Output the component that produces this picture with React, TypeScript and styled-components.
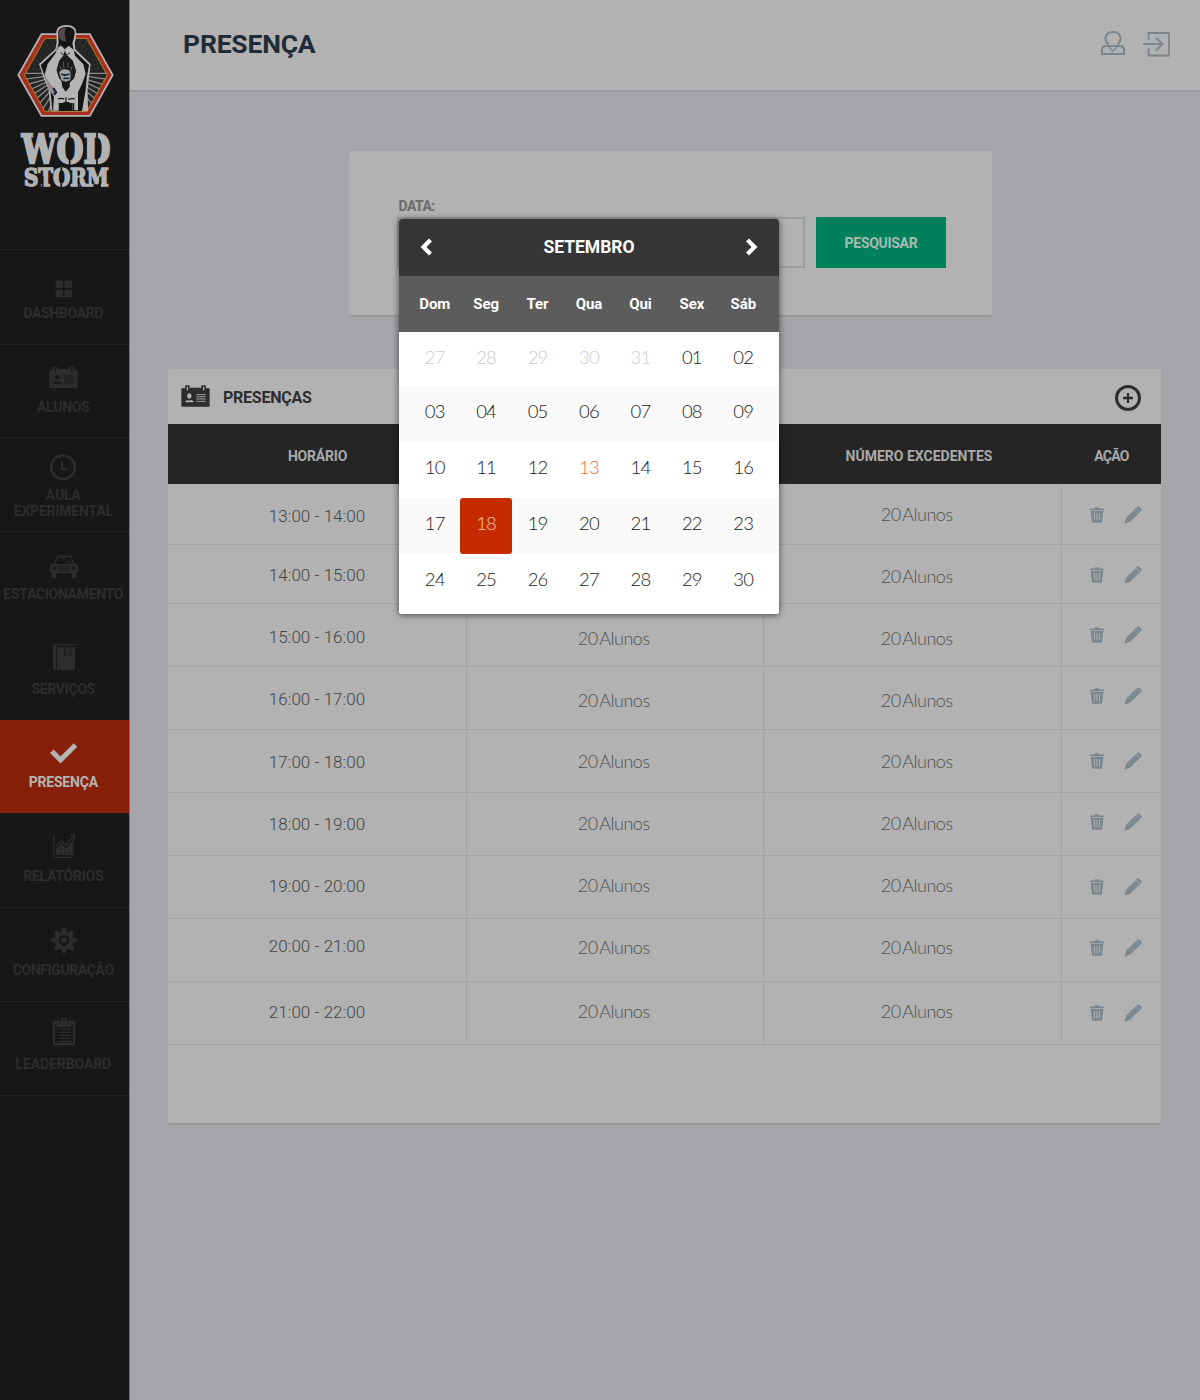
import React from 'react';
import styled, { createGlobalStyle } from 'styled-components';

const Global = createGlobalStyle`
  * { box-sizing: border-box; }
  body { margin: 0; background: #a4a5a9; font-family: Roboto, "Open Sans", sans-serif; }
`;

const Page = styled.div`
  display: flex;
  width: 1200px;
  height: 1400px;
  overflow: hidden;
`;

/* ---------- sidebar ---------- */
const Sidebar = styled.nav`
  display: flex;
  flex-direction: column;
  width: 130px;
  flex: none;
  background: #171717;
  border-right: 1px solid #747475;
`;

const Brand = styled.div`
  height: 250px;
  padding-top: 10px;
  border-bottom: 1px solid #222;
`;

const NavItem = styled.a<{ $height: number; $top: number; $active?: boolean; $line?: boolean }>`
  display: flex;
  flex-direction: column;
  align-items: center;
  height: ${p => p.$height}px;
  padding: ${p => p.$top}px 1px 0 0;
  border-bottom: ${p => (p.$line ? '1px solid #222' : 'none')};
  background: ${p => (p.$active ? '#86200a' : 'transparent')};
  color: ${p => (p.$active ? '#b4b4b4' : '#2d2d2d')};
`;

const NavIcon = styled.svg`
  width: 36px;
  height: 36px;
  flex: none;
`;

const NavLabel = styled.span<{ $track: number }>`
  margin: 4px 1.5px 0 0;
  font-size: 14px;
  font-weight: 700;
  line-height: 16px;
  letter-spacing: ${p => p.$track}px;
  text-align: center;
  white-space: pre;
`;

/* ---------- main ---------- */
const Main = styled.main`
  display: flex;
  flex-direction: column;
  flex: 1;
`;

const TopBar = styled.header`
  display: flex;
  align-items: center;
  justify-content: space-between;
  height: 92px;
  padding: 0 30px 4px 53px;
  background: #b2b2b2;
  border-bottom: 2px solid #9a9ba0;
`;

const Title = styled.h1`
  margin: 0;
  font-size: 26.5px;
  font-weight: 700;
  letter-spacing: -0.2px;
  color: #1f2c38;
`;

const TopIcons = styled.div`
  display: flex;
  gap: 15px;
  margin-top: 1px;
  color: #7c868c;
  svg { display: block; width: 28px; height: 28px; }
`;

const SearchCard = styled.section`
  display: flex;
  flex-direction: column;
  width: 643px;
  height: 166px;
  margin: 59px 0 0 219px;
  padding: 47px 46px 0 48px;
  background: #b2b2b2;
  border-bottom: 2px solid #98999d;
  border-radius: 3px;
`;

const FieldLabel = styled.label`
  padding-left: 1.5px;
  height: 19px;
  line-height: 16px;
  font-size: 14px;
  font-weight: 700;
  letter-spacing: -0.5px;
  color: #6a6a6a;
`;

const SearchRow = styled.div`
  display: flex;
  gap: 11px;
`;

const DateField = styled.div`
  position: relative;
  width: 408px;
  height: 51px;
  border: 2px solid #98a09e;
`;

const SearchButton = styled.button`
  width: 130px;
  height: 51px;
  border: 0;
  padding: 1px 0 0 0;
  background: #00815a;
  color: #a9b9b3;
  font: 700 14px/50px Roboto, sans-serif;
  letter-spacing: -0.3px;
`;

/* ---------- calendar ---------- */
const Calendar = styled.div`
  position: absolute;
  z-index: 2;
  left: 0;
  top: 0;
  width: 380px;
  height: 395px;
  border-radius: 3px;
  overflow: hidden;
  background: #fff;
  box-shadow: 0 1px 7px rgba(0, 0, 0, 0.6);
`;

const MonthBar = styled.div`
  display: flex;
  align-items: center;
  justify-content: space-between;
  height: 57px;
  padding: 0 21px 1px;
  background: #353535;
  color: #fff;
  font-size: 17.5px;
  font-weight: 700;
  letter-spacing: 0;
  svg { display: block; width: 13px; height: 20px; }
`;

const WeekGrid = styled.div<{ $height: number; $shade?: string }>`
  display: grid;
  grid-template-columns: repeat(7, 1fr);
  height: ${p => p.$height}px;
  padding: 0 10px;
  background: ${p => p.$shade || '#fff'};
`;

const Weekday = styled.div`
  text-align: center;
  font-size: 15px;
  font-weight: 700;
  line-height: 56px;
  letter-spacing: -0.1px;
  color: #fff;
`;

const Day = styled.div<{ $kind: string }>`
  text-align: center;
  font: 300 18.5px/50px Lato, sans-serif;
  letter-spacing: -0.8px;
  border-radius: 3px;
  background: ${p => (p.$kind === 'selected' ? '#c62b00' : 'transparent')};
  color: ${p => ({ other: '#cbcbcb', today: '#ea6f45', selected: '#f5c5b5' } as Record<string, string>)[p.$kind] || '#222'};
`;

/* ---------- table ---------- */
const Panel = styled.section`
  width: 993px;
  height: 756px;
  margin: 52px 0 0 38px;
  background: #b2b2b2;
  border-bottom: 2px solid #98999d;
  border-radius: 3px;
`;

const PanelHead = styled.div`
  display: flex;
  align-items: center;
  height: 55px;
  padding: 0 20px 0 13px;
  color: #2d2d2d;
`;

const PanelTitle = styled.h2`
  flex: 1;
  margin: 2px 0 0 13px;
  font-size: 16px;
  font-weight: 700;
  letter-spacing: -0.25px;
`;

const HeadIcon = styled.svg`
  width: 29px;
  height: 22px;
  margin-bottom: 2px;
`;

const AddIcon = styled.svg`
  width: 26px;
  height: 26px;
  margin-top: 3px;
`;

const Row = styled.div<{ $height: number; $head?: boolean }>`
  display: grid;
  grid-template-columns: 299px 297px 298px 99px;
  height: ${p => p.$height}px;
  background: ${p => (p.$head ? '#252525' : 'transparent')};
  border-bottom: ${p => (p.$head ? 'none' : '1px solid #a3a3a4')};
`;

const HeadCell = styled.div<{ $track?: number; $indent?: number }>`
  display: flex;
  align-items: center;
  justify-content: center;
  padding: 4px 0 0 ${p => p.$indent || 0}px;
  font-size: 14px;
  font-weight: 700;
  letter-spacing: ${p => p.$track || 0}px;
  color: #a9a9ab;
`;

const Cell = styled.div<{ $rule?: boolean; $indent?: number }>`
  display: flex;
  align-items: center;
  justify-content: center;
  padding-left: ${p => p.$indent || 0}px;
  border-right: ${p => (p.$rule ? '1px solid #a3a3a4' : 'none')};
`;

const Time = styled.span<{ $shift: number }>`
  margin-top: ${p => p.$shift * 2}px;
  font-size: 17px;
  font-weight: 300;
  letter-spacing: 0.05px;
  color: #444;
`;

const Count = styled.span<{ $shift: number }>`
  margin: ${p => p.$shift * 2 - 2}px 2.5px 0 0;
  font: 300 18px/22px Lato, sans-serif;
  letter-spacing: -0.45px;
  word-spacing: -2.5px;
  color: #505050;
`;

const Actions = styled.div<{ $shift: number }>`
  display: flex;
  align-items: center;
  gap: 20px;
  margin: ${p => p.$shift * 2}px 0 0 9px;
  color: #7a868d;
`;

const Svg = styled.svg<{ $w: number; $h: number }>`
  display: block;
  width: ${p => p.$w}px;
  height: ${p => p.$h}px;
`;

const Rays = () => (
  <g stroke="#8b8b8b">
    {Array.from({ length: 44 }, (_, i) => {
      const a = (i * Math.PI) / 22;
      const upper = a > Math.PI;
      return (
        <line
          key={i}
          x1={197 + Math.cos(a) * 58}
          y1={190 + Math.sin(a) * 58}
          x2={197 + Math.cos(a) * 150}
          y2={190 + Math.sin(a) * 150}
          strokeWidth={upper ? 2.4 : 4}
          strokeDasharray={upper ? '3 7' : undefined}
          strokeOpacity={upper ? 0.5 : 1}
        />
      );
    })}
  </g>
);

const Logo = () => (
  <Svg $w={129} $h={190} viewBox="0 0 387 570">
    <defs>
      <clipPath id="hex"><path d="M135 86H260L322 195L260 304H135L74 195Z" /></clipPath>
    </defs>
    <path d="M123 70H271L341 195L271 320H123L52 195Z" fill="#b5b5b5" />
    <path d="M126 75H268L335 195L268 315H126L58 195Z" fill="#a82f1d" />
    <path d="M134 84H261L324 195L261 306H134L71 195Z" fill="#a9711d" />
    <path d="M136 87H259L320 195L259 303H136L75 195Z" fill="#242424" />
    <g clipPath="url(#hex)"><Rays /></g>
    <path d="M169 66Q170 45 200 45Q229 45 229 68Q229 86 224 98L226 118L272 162L267 202L263 240L264 304H152L146 240L128 196L117 162L166 118L170 98Z" fill="#b5b5b5" />
    <path d="M174 68Q175 50 200 50Q224 50 224 70Q223 86 217 98L221 121L267 165L260 204L257 240L246 303H157L151 240L133 196L122 165L170 121L176 98Z" fill="#151515" />
    <path d="M175 70Q179 52 200 52Q192 62 195 78L199 95L184 91Q174 82 175 70Z" fill="#54484d" />
    <path d="M168 130Q165 112 176 109L190 112L193 126L181 139L164 174L157 199L171 214L174 244L176 303H158L162 260L146 237L133 194L143 162Z" fill="#978991" />
    <path d="M170 125L182 106L195 119L190 137L178 152L170 181L178 205L188 216H211L222 205L228 182L218 152L199 134L194 118L206 107L221 119L225 137L250 163L257 191L246 222L234 247V301H218V279H178V301H162V257L169 242L152 223L135 197L143 163Z" fill="#b4b4b4" />
    <path d="M170 181L178 205L190 216H209L222 205L228 182L218 152L199 134L190 137L178 152Z" fill="#1c1c1c" />
    <path d="M181 128L195 137L210 129" fill="none" stroke="#242424" strokeWidth="3" />
    <path d="M190 155L192 174M204 157V174M180 168L184 180M216 168L213 182" stroke="#777" strokeWidth="2" />
    <path d="M177 188Q182 175 197 177Q213 178 213 194L211 212L199 225L184 213Z" fill="#a4a4a4" stroke="#242424" strokeWidth="2" />
    <path d="M183 192L194 196L209 192M190 205H208" stroke="#1d3346" strokeWidth="5" />
    <path d="M184 211L197 215L210 211L209 231L197 245L187 231Z" fill="#171717" />
    <path d="M160 234L168 247L162 254" fill="none" stroke="#17243d" strokeWidth="7" />
    <path d="M174 267Q184 263 193 268M205 268Q216 264 225 267M198 262V301M190 278L208 278M192 301L198 281L207 299M178 303V279M221 303V279" fill="none" stroke="#151515" strokeWidth="3.500" />
    <g fontFamily="DejaVu Serif, serif" fontWeight="700" fill="#b2b2b2" stroke="#b2b2b2">
      <text x="65" y="460" fontSize="119" strokeWidth="7" textLength="266" lengthAdjust="spacingAndGlyphs">WOD</text>
      <text x="72" y="528" fontSize="71" strokeWidth="5" textLength="254" lengthAdjust="spacingAndGlyphs">STORM</text>
    </g>
    <path d="M209 364V467M291 366V468M184 472V532M128 498V532M236 502V532M300 500V532" stroke="#171717" strokeWidth="5" />
  </Svg>
);

const IdCard = ({ ink }: { ink: string }) => (
  <>
    <path d="M13 32H21V26Q21 23 24 23H32Q35 23 35 26V30H70V26Q70 23 73 23H81Q84 23 84 26V32H92Q95 32 95 35V84Q95 87 92 87H13Q10 87 10 84V35Q10 32 13 32Z" fill="currentColor" />
    <path d="M28 27V38M77 27V38" stroke={ink} strokeWidth="4" />
    <ellipse cx="34" cy="55" rx="6.5" ry="8" fill={ink} />
    <path d="M22 74Q22 68 30 67L34 70L38 67Q47 68 47 74Z" fill={ink} />
    <path d="M55 51H83M55 57.5H83M55 64H83M55 71H83" stroke={ink} strokeWidth="2.6" />
  </>
);

const DARK = '#171717';

const icons: Record<string, React.ReactNode> = {
  dash: <path d="M29 47H51V69H29ZM56 47H78V69H56ZM29 74H51V96H29ZM56 74H78V96H56Z" fill="currentColor" />,
  card: <IdCard ink={DARK} />,
  clock: (
    <g fill="none" stroke="currentColor">
      <circle cx="51" cy="61" r="35.500" strokeWidth="7.500" />
      <path d="M48 45V66H63" strokeWidth="6" />
    </g>
  ),
  car: (
    <>
      <path d="M25 55L33 34Q34 31.500 37 31.500H72Q75 31.500 76 34L84 55" fill="none" stroke="currentColor" strokeWidth="4" />
      <path d="M18 54H90Q96 55 96 61V77Q96 82 91 82H17Q12 82 12 77V61Q12 55 18 54ZM18 82H30V93Q30 96 27 96H21Q18 96 18 93ZM78 82H90V93Q90 96 87 96H81Q78 96 78 93Z" fill="currentColor" />
      <circle cx="25" cy="66" r="5.500" fill={DARK} />
      <circle cx="83" cy="66" r="5.500" fill={DARK} />
      <path d="M36 61H72M36 67H72M36 73H72" stroke={DARK} strokeWidth="2.500" />
      <path d="M61 54Q61 47 67 47Q73 47 73 54M53 32V38M48 38H58" fill="none" stroke="currentColor" strokeWidth="2.500" />
    </>
  ),
  book: (
    <>
      <path d="M27 9H87V13H30Q25 14 30 19H87V84Q87 87 84 87H24Q21 87 21 84V15Q21 9 27 9Z" fill="currentColor" />
      <path d="M31.500 20V87" stroke={DARK} strokeWidth="2.500" />
      <path d="M56 17V44L64.500 36L73 44V17" fill="none" stroke={DARK} strokeWidth="2.500" />
    </>
  ),
  check: <path d="M17.500 52L43.500 78L88.500 33" fill="none" stroke="currentColor" strokeWidth="15" />,
  chart: (
    <>
      <path d="M23 21V88.500H83" fill="none" stroke="currentColor" strokeWidth="3.500" />
      <path d="M30 81V64L46 48L59 60L82 37V81Z" fill="currentColor" />
      <path d="M44 50V81M56 58V81M69 50V81" stroke={DARK} strokeWidth="1.500" />
      <path d="M31 55L46 39L59 51L83 25M72 22.500H85V36" fill="none" stroke="currentColor" strokeWidth="4" />
    </>
  ),
  gear: (
    <>
      <g stroke="currentColor" strokeWidth="15" strokeLinecap="round">
        <path d="M54 24V86M23 55H85M32.500 33.500L75.500 76.500M32.500 76.500L75.500 33.500" />
      </g>
      <circle cx="54" cy="55" r="28" fill="currentColor" />
      <circle cx="54" cy="55" r="16" fill={DARK} />
      <circle cx="54" cy="55" r="8.500" fill="currentColor" />
    </>
  ),
  clip: (
    <>
      <rect x="24" y="18" width="60" height="66" rx="3" fill="none" stroke="currentColor" strokeWidth="7" />
      <path d="M43 10H65V24H43Z" fill={DARK} />
      <path d="M32 22H45V13Q45 5 54 5Q63 5 63 13V22H76V33H32Z" fill="currentColor" />
      <circle cx="54" cy="14" r="3.500" fill={DARK} />
      <path d="M42 39.500H76M42 49H76M42 58H76M42 67H76M42 76H76M33 39.500H37M33 49H37M33 58H37M33 67H37M33 76H37" stroke="currentColor" strokeWidth="3.500" />
    </>
  ),
};

const nav = [
  { icon: 'dash', label: 'DASHBOARD', height: 95, top: 15, track: -0.33, line: true },
  { icon: 'card', label: 'ALUNOS', height: 93, top: 14, track: -0.25, line: true },
  { icon: 'clock', label: 'AULA\nEXPERIMENTAL', height: 94, top: 9, track: -0.2, line: true },
  { icon: 'car', label: 'ESTACIONAMENTO', height: 94, top: 14, track: -0.3, line: false },
  { icon: 'book', label: 'SERVIÇOS', height: 94, top: 15, track: -0.3, line: false },
  { icon: 'check', label: 'PRESENÇA', height: 93, top: 14, track: -0.2, line: false, active: true },
  { icon: 'chart', label: 'RELATÓRIOS', height: 95, top: 15, track: -0.25, line: true },
  { icon: 'gear', label: 'CONFIGURAÇÃO', height: 94, top: 14, track: -0.4, line: true },
  { icon: 'clip', label: 'LEADERBOARD', height: 94, top: 14, track: -0.1, line: true },
];

const Trash = () => (
  <Svg $w={14} $h={16} viewBox="0 0 42 51" preserveAspectRatio="none">
    <path d="M0 5H14V3Q14 1 16 1H26Q28 1 28 3V5H42V10H0ZM2 13H40L36 47Q35.500 50 33 50H9Q6.500 50 6 47Z" fill="currentColor" />
    <path d="M13 19L14 43M21 19V43M29 19L28 43" stroke="#b2b2b2" strokeWidth="3" />
  </Svg>
);

const Pencil = () => (
  <Svg $w={18} $h={18} viewBox="0 0 57 57">
    <path d="M1 56L8 36L38 6L51 19L20 49Z" fill="currentColor" />
    <path d="M40 4Q44 0 49 3L54 8Q58 12 54 17L52 18L39 5Z" fill="currentColor" />
    <path d="M13 38L38 13M19 42L44 18" stroke="#949da1" strokeWidth="2" />
  </Svg>
);

/* The open calendar lies over the enrolled count of the first two rows. */
const rows = [
  { time: '13:00 - 14:00', h: 61, t: 1.5, c: 0.5, a: 1, enrolled: '' },
  { time: '14:00 - 15:00', h: 59, t: 1, c: 3, a: 1, enrolled: '' },
  { time: '15:00 - 16:00', h: 63, t: 2, c: 4, a: 0, enrolled: '20 Alunos' },
  { time: '16:00 - 17:00', h: 63, t: 1, c: 3, a: -2, enrolled: '20 Alunos' },
  { time: '17:00 - 18:00', h: 63, t: 1, c: 1, a: 0, enrolled: '20 Alunos' },
  { time: '18:00 - 19:00', h: 63, t: 0, c: 0, a: -2, enrolled: '20 Alunos' },
  { time: '19:00 - 20:00', h: 63, t: -1, c: -1, a: 0, enrolled: '20 Alunos' },
  { time: '20:00 - 21:00', h: 63, t: -4, c: -2, a: -2, enrolled: '20 Alunos' },
  { time: '21:00 - 22:00', h: 63, t: -1, c: -1, a: 0, enrolled: '20 Alunos' },
];

const weeks = [
  { h: 54, days: ['27', '28', '29', '30', '31', '01', '02'] },
  { h: 56, days: ['03', '04', '05', '06', '07', '08', '09'], shade: '#f9f9f9' },
  { h: 56, days: ['10', '11', '12', '13', '14', '15', '16'] },
  { h: 56, days: ['17', '18', '19', '20', '21', '22', '23'], shade: '#f9f9f9' },
  { h: 60, days: ['24', '25', '26', '27', '28', '29', '30'] },
];

const kindOf = (week: number, day: number) => {
  if (week === 0 && day < 5) return 'other';
  if (week === 2 && day === 3) return 'today';
  if (week === 3 && day === 1) return 'selected';
  return 'plain';
};

const DatePicker = () => (
  <Calendar>
    <MonthBar>
      <svg viewBox="0 0 13 20"><path d="M10.500 3L3.500 10L10.500 17" fill="none" stroke="#fff" strokeWidth="4.200" /></svg>
      <span>SETEMBRO</span>
      <svg viewBox="0 0 13 20"><path d="M2.500 3L9.500 10L2.500 17" fill="none" stroke="#fff" strokeWidth="4.200" /></svg>
    </MonthBar>
    <WeekGrid $height={56} $shade="#5c5c5c">
      {['Dom', 'Seg', 'Ter', 'Qua', 'Qui', 'Sex', 'Sáb'].map(d => <Weekday key={d}>{d}</Weekday>)}
    </WeekGrid>
    {weeks.map((w, i) => (
      <WeekGrid key={i} $height={w.h} $shade={w.shade}>
        {w.days.map((d, j) => <Day key={d} $kind={kindOf(i, j)}>{d}</Day>)}
      </WeekGrid>
    ))}
  </Calendar>
);

export default function App() {
  return (
    <Page>
      <Global />
      <Sidebar>
        <Brand><Logo /></Brand>
        {nav.map(n => (
          <NavItem key={n.icon} $height={n.height} $top={n.top} $line={n.line} $active={n.active}>
            <NavIcon viewBox="0 0 108 108">{icons[n.icon]}</NavIcon>
            <NavLabel $track={n.track}>{n.label}</NavLabel>
          </NavItem>
        ))}
      </Sidebar>
      <Main>
        <TopBar>
          <Title>PRESENÇA</Title>
          <TopIcons>
            <svg viewBox="0 0 28 28" fill="none" stroke="currentColor" strokeWidth="2">
              <path d="M9.500 14.500Q6.500 12 6.500 8.300Q7 2 14 2Q21 2 21.500 8.300Q21.500 12 18.500 14.500" />
              <path d="M3 24V20Q3 16 7 16H21Q25 16 25 20V24Z" />
              <path d="M9.500 16.500L14 21L18.500 16.500" strokeWidth="1.500" />
            </svg>
            <svg viewBox="0 0 28 28" fill="none" stroke="currentColor" strokeWidth="1.800">
              <path d="M6.500 10V3H27V25.500H6.500V18" />
              <path d="M1 14H20M14 8L20.500 14L14 20.500" strokeWidth="2" />
            </svg>
          </TopIcons>
        </TopBar>
        <SearchCard>
          <FieldLabel>DATA:</FieldLabel>
          <SearchRow>
            <DateField><DatePicker /></DateField>
            <SearchButton>PESQUISAR</SearchButton>
          </SearchRow>
        </SearchCard>
        <Panel>
          <PanelHead>
            <HeadIcon viewBox="9 22 87 66"><IdCard ink="#b2b2b2" /></HeadIcon>
            <PanelTitle>PRESENÇAS</PanelTitle>
            <AddIcon viewBox="0 0 26 26" fill="none" stroke="currentColor">
              <circle cx="13" cy="13" r="11.500" strokeWidth="3" />
              <path d="M13 8V18M8 13H18" strokeWidth="2.300" />
            </AddIcon>
          </PanelHead>
          <Row $height={60} $head>
            <HeadCell $track={-0.2}>HORÁRIO</HeadCell>
            <HeadCell />
            <HeadCell $track={0} $indent={12}>NÚMERO EXCEDENTES</HeadCell>
            <HeadCell $track={-0.7}>AÇÃO</HeadCell>
          </Row>
          {rows.map(r => (
            <Row key={r.time} $height={r.h}>
              <Cell $rule><Time $shift={r.t}>{r.time}</Time></Cell>
              <Cell $rule>{r.enrolled && <Count $shift={r.c}>{r.enrolled}</Count>}</Cell>
              <Cell $rule $indent={11}><Count $shift={r.c}>20 Alunos</Count></Cell>
              <Cell><Actions $shift={r.a}><Trash /><Pencil /></Actions></Cell>
            </Row>
          ))}
        </Panel>
      </Main>
    </Page>
  );
}
